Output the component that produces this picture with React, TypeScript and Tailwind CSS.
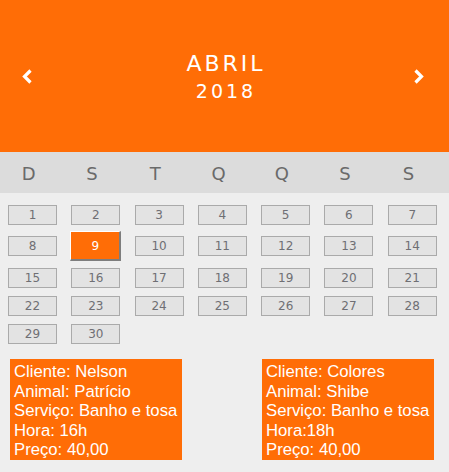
const weekdays = ['D', 'S', 'T', 'Q', 'Q', 'S', 'S'];

const weeks: (number | null)[][] = [
  [1, 2, 3, 4, 5, 6, 7],
  [8, 9, 10, 11, 12, 13, 14],
  [15, 16, 17, 18, 19, 20, 21],
  [22, 23, 24, 25, 26, 27, 28],
  [29, 30, null, null, null, null, null],
];

// margin above each week row (row 2 holds the taller selected day)
const rowMargins = ['mt-0', 'mt-[6px]', 'mt-[7px]', 'mt-[8px]', 'mt-[8px]'];

const appointments = [
  { cliente: 'Nelson', animal: 'Patrício', servico: 'Banho e tosa', hora: 'Hora: 16h', preco: '40,00' },
  { cliente: 'Colores', animal: 'Shibe', servico: 'Banho e tosa', hora: 'Hora:18h', preco: '40,00' },
];

function Chevron({ dir }: { dir: 'left' | 'right' }) {
  return (
    <svg width="10" height="15" viewBox="0 0 10 15" fill="none">
      <polyline
        points={dir === 'left' ? '8.5,1.5 2.5,7.5 8.5,13.5' : '1.5,1.5 7.5,7.5 1.5,13.5'}
        stroke="white"
        strokeWidth="3.2"
        strokeLinecap="butt"
        strokeLinejoin="miter"
      />
    </svg>
  );
}

export default function App() {
  const selected = 9;

  return (
    <div className="w-[449px] h-[472px] bg-[#eeeeee] font-['DejaVu_Sans',sans-serif] overflow-hidden">
      {/* Header */}
      <div className="h-[152px] bg-[#ff6d06] grid grid-cols-[1fr_auto_1fr] items-center">
        <button className="justify-self-start ml-[22px] flex">
          <Chevron dir="left" />
        </button>
        <div className="flex flex-col items-center text-white">
          <span className="text-[22px] leading-[26px] tracking-[3px] pl-[3px]">ABRIL</span>
          <span className="text-[19px] leading-[22px] tracking-[3px] pl-[3px] mt-[3px]">2018</span>
        </div>
        <button className="justify-self-end mr-[25px] flex">
          <Chevron dir="right" />
        </button>
      </div>

      {/* Weekdays */}
      <div className="h-[41px] bg-[#dcdcdc] pt-[2px]">
        <div className="grid grid-cols-7 w-[443px]">
          {weekdays.map((d, i) => (
            <div key={i} className="text-center pr-[6px] text-[18px] leading-[39px] text-[#6a6a6a]">
              {d}
            </div>
          ))}
        </div>
      </div>

      {/* Days */}
      <div className="pt-[12px]">
        {weeks.map((week, wi) => (
          <div key={wi} className={`grid grid-cols-7 w-[443px] items-center ${rowMargins[wi]}`}>
            {week.map((day, di) =>
              day === null ? (
                <div key={di} />
              ) : day === selected ? (
                <div
                  key={di}
                  className="ml-[7px] w-[51px] h-[30px] flex items-center justify-center bg-[#ff6d06] border-t border-l border-white border-r-2 border-b-2 border-r-[#7d7d7d] border-b-[#7d7d7d] text-white text-[12px]"
                >
                  {day}
                </div>
              ) : (
                <div
                  key={di}
                  className="ml-2 w-[49px] h-[20px] border border-[#aaaaaa] bg-[#e3e3e3] text-center text-[12px] leading-[20px] text-[#6f6f74]"
                >
                  <span className="relative -top-px">{day}</span>
                </div>
              )
            )}
          </div>
        ))}
      </div>

      {/* Appointments */}
      <div className="flex pl-[10px] gap-[80px] mt-[15px]">
        {appointments.map((a, i) => (
          <div
            key={i}
            className="w-[172px] h-[101px] bg-[#ff6d06] px-[4px] pt-[3px] text-white font-['Liberation_Sans',Arial,sans-serif] text-[16.7px] leading-[19.5px] whitespace-nowrap"
          >
            <div>Cliente: {a.cliente}</div>
            <div>Animal: {a.animal}</div>
            <div>Serviço: {a.servico}</div>
            <div>{a.hora}</div>
            <div>Preço: {a.preco}</div>
          </div>
        ))}
      </div>
    </div>
  );
}
